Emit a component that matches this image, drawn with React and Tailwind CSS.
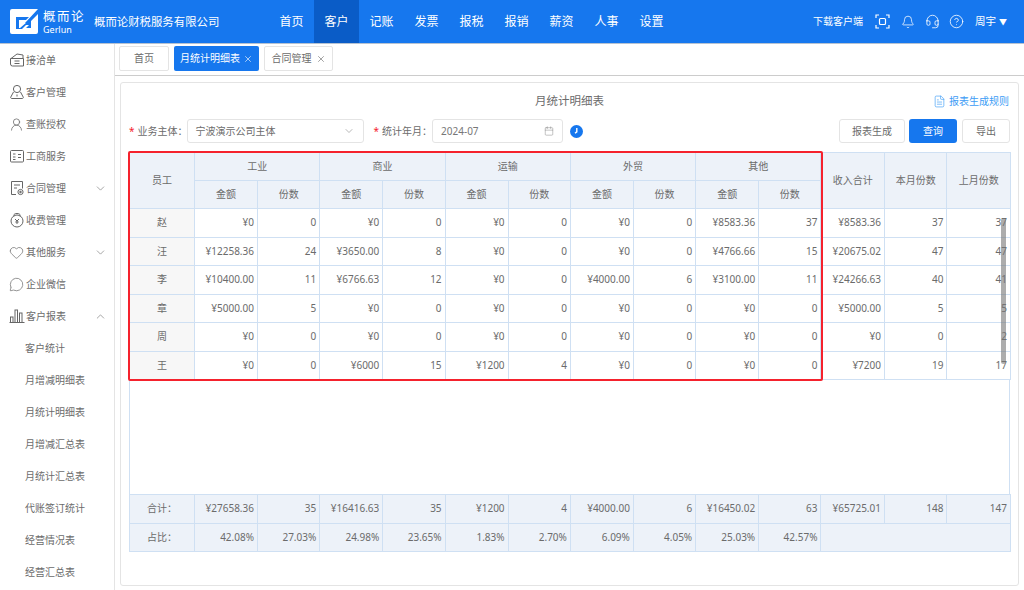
import {
  Bell,
  ChevronDown,
  ChevronUp,
  CircleHelp,
  Headset,
  Heart,
  MessageCircle,
  UserRound,
  X,
  FileText,
  Calendar,
} from "lucide-react";

const FONT = { fontFamily: '"Noto Sans", "Noto Sans CJK SC", sans-serif' };

const navItems = ["首页", "客户", "记账", "发票", "报税", "报销", "薪资", "人事", "设置"];

function TrayIcon() {
  return (
    <svg width="16" height="16" viewBox="0 0 16 16" fill="none" stroke="#666" strokeWidth="1">
      <path d="M2 6.5 8 2l6 1v3.5M1.5 6.5h13v7.5h-11a2 2 0 0 1-2-2z" />
      <path d="M5.5 9h5M5.5 11.5h5" />
    </svg>
  );
}

function UserTriIcon() {
  return (
    <svg width="16" height="16" viewBox="0 0 16 16" fill="none" stroke="#666" strokeWidth="1">
      <circle cx="8" cy="5" r="3.6" />
      <path d="M4.5 8 1.8 13a1 1 0 0 0 .9 1.5h10.6a1 1 0 0 0 .9-1.5L11.5 8" />
      <path d="M8 10.5v2" />
    </svg>
  );
}

function CardIcon() {
  return (
    <svg width="16" height="16" viewBox="0 0 16 16" fill="none" stroke="#666" strokeWidth="1">
      <rect x="1.5" y="2.5" width="13" height="11.5" rx="1" />
      <path d="M4 6h2.5M4 9h2.5M4 11.5h2.5M9 6.5h3M9 9.5h3" />
    </svg>
  );
}

function ContractIcon() {
  return (
    <svg width="16" height="16" viewBox="0 0 16 16" fill="none" stroke="#666" strokeWidth="1">
      <path d="M7 14.5H2.5v-13h11v7" />
      <path d="M5 5h6M5 8h3" />
      <circle cx="11.5" cy="12" r="2.6" />
      <circle cx="11.5" cy="12" r="0.8" fill="#666" />
    </svg>
  );
}

function FeeIcon() {
  return (
    <svg width="16" height="16" viewBox="0 0 16 16" fill="none" stroke="#666" strokeWidth="1">
      <circle cx="8" cy="9" r="6" />
      <path d="M5 4.5V3.2C5 2 6 1.5 8 1.5s3 .5 3 1.7v1.3" />
      <path d="m6 7 2 2 2-2M8 9v3M6.3 10h3.4" />
    </svg>
  );
}

function BarsIcon() {
  return (
    <svg width="16" height="16" viewBox="0 0 16 16" fill="none" stroke="#666" strokeWidth="1">
      <path d="M.5 14.5h15" />
      <rect x="1.5" y="9" width="2.5" height="5.5" />
      <rect x="6" y="2" width="2.5" height="12.5" />
      <rect x="10.5" y="5" width="2.5" height="9.5" />
    </svg>
  );
}

function ScanIcon() {
  return (
    <svg width="15" height="15" viewBox="0 0 15 15" fill="none" stroke="#fff" strokeWidth="1.2" className="ml-[12px]">
      <path d="M1 4V1h3M11 1h3v3M14 11v3h-3M4 14H1v-3" />
      <rect x="4.5" y="4.5" width="6" height="6" rx="1" />
    </svg>
  );
}

const sideItems = [
  { label: "接洽单", icon: <TrayIcon /> },
  { label: "客户管理", icon: <UserTriIcon /> },
  { label: "查账授权", icon: <UserRound size={15} strokeWidth={1.2} color="#666" /> },
  { label: "工商服务", icon: <CardIcon /> },
  { label: "合同管理", icon: <ContractIcon />, arrow: "down" },
  { label: "收费管理", icon: <FeeIcon /> },
  { label: "其他服务", icon: <Heart size={15} strokeWidth={1.1} color="#666" />, arrow: "down" },
  { label: "企业微信", icon: <MessageCircle size={15} strokeWidth={1.1} color="#666" /> },
  { label: "客户报表", icon: <BarsIcon />, arrow: "up" },
];

const subItems = ["客户统计", "月增减明细表", "月统计明细表", "月增减汇总表", "月统计汇总表", "代账签订统计", "经营情况表", "经营汇总表"];

const groups = ["工业", "商业", "运输", "外贸", "其他"];

const rows = [
  ["赵", "¥0", 0, "¥0", 0, "¥0", 0, "¥0", 0, "¥8583.36", 37, "¥8583.36", 37, 37],
  ["汪", "¥12258.36", 24, "¥3650.00", 8, "¥0", 0, "¥0", 0, "¥4766.66", 15, "¥20675.02", 47, 47],
  ["李", "¥10400.00", 11, "¥6766.63", 12, "¥0", 0, "¥4000.00", 6, "¥3100.00", 11, "¥24266.63", 40, 41],
  ["章", "¥5000.00", 5, "¥0", 0, "¥0", 0, "¥0", 0, "¥0", 0, "¥5000.00", 5, 5],
  ["周", "¥0", 0, "¥0", 0, "¥0", 0, "¥0", 0, "¥0", 0, "¥0", 0, 2],
  ["王", "¥0", 0, "¥6000", 15, "¥1200", 4, "¥0", 0, "¥0", 0, "¥7200", 19, 17],
];

const totals = ["¥27658.36", 35, "¥16416.63", 35, "¥1200", 4, "¥4000.00", 6, "¥16450.02", 63, "¥65725.01", 148, 147];
const ratios = ["42.08%", "27.03%", "24.98%", "23.65%", "1.83%", "2.70%", "6.09%", "4.05%", "25.03%", "42.57%"];

function Cols() {
  return (
    <colgroup>
      <col className="w-[65px]" />
      {groups.map((g) => [<col key={g + "a"} className="w-[63px]" />, <col key={g + "b"} className="w-[62.3px]" />])}
      <col className="w-[63.5px]" />
      <col className="w-[62.5px]" />
      <col className="w-[63.5px]" />
    </colgroup>
  );
}

const th = "border border-[#cfe0f3] bg-[#edf2f9] font-normal text-[10px] text-[#6b6b6b]";
const td = "border border-[#cfe0f3] text-right pr-[3px] text-[10px] text-[#6b6b6b]";

function MonthlyTable() {
  return (
    <div className="relative mt-[9px] flex h-[400px] w-[881px] flex-col">
      <table className="w-full table-fixed border-collapse">
        <Cols />
        <thead>
          <tr className="h-[28px]">
            <th rowSpan={2} className={th}>员工</th>
            {groups.map((g) => (
              <th key={g} colSpan={2} className={th}>{g}</th>
            ))}
            <th rowSpan={2} className={th}>收入合计</th>
            <th rowSpan={2} className={th}>本月份数</th>
            <th rowSpan={2} className={th}>上月份数</th>
          </tr>
          <tr className="h-[28px]">
            {groups.map((g) => [
              <th key={g + "a"} className={th}>金额</th>,
              <th key={g + "b"} className={th}>份数</th>,
            ])}
          </tr>
        </thead>
        <tbody>
          {rows.map((row) => (
            <tr key={row[0]} className="h-[28.5px]">
              {row.map((v, i) =>
                i === 0 ? (
                  <td key={i} className="border border-[#cfe0f3] bg-[#f7f7f7] text-center text-[10px] text-[#6b6b6b]">{v}</td>
                ) : (
                  <td key={i} className={td}>{v}</td>
                )
              )}
            </tr>
          ))}
        </tbody>
      </table>
      <div className="flex-1 border-x border-[#cfe0f3]" />
      <table className="w-full table-fixed border-collapse">
        <Cols />
        <tbody className="bg-[#edf2f9]">
          <tr className="h-[28.5px]">
            <td className="border border-[#cfe0f3] text-center text-[10px] text-[#6b6b6b]">合计：</td>
            {totals.map((v, i) => (
              <td key={i} className={td}>{v}</td>
            ))}
          </tr>
          <tr className="h-[28.5px]">
            <td className="border border-[#cfe0f3] text-center text-[10px] text-[#6b6b6b]">占比：</td>
            {ratios.map((v, i) => (
              <td key={i} className={td}>{v}</td>
            ))}
            <td colSpan={3} className="border border-[#cfe0f3]" />
          </tr>
        </tbody>
      </table>
      {/* red highlight over the table */}
      <div className="pointer-events-none absolute -left-[1px] -top-[1px] h-[230px] w-[695px] rounded-[2px] border-2 border-[#f5222d]" />
      {/* scrollbar */}
      <div className="absolute left-[872px] top-[66px] h-[146px] w-[5px] rounded-full bg-[#777]/60" />
    </div>
  );
}

export default function App() {
  return (
    <div className="flex h-[590px] w-[1024px] flex-col overflow-hidden bg-white" style={FONT}>
      {/* Header */}
      <header className="flex h-[44px] shrink-0 items-center border-b border-[#b5c2d2] bg-[#1677ee] text-white">
        <div className="flex w-[269px] shrink-0 items-center pl-[10px]">
          <svg width="28" height="25" viewBox="0 0 28 25">
            <path d="M2 0h26L15 14h4l9-9v18a2 2 0 0 1-2 2H2a2 2 0 0 1-2-2V2a2 2 0 0 1 2-2z" fill="#fff" />
            <path d="M6 8h13l-3 3H9v8h1l10-8.5h1V19l-5 0 3-3h-3l-4 4H6z" fill="#1677ee" />
          </svg>
          <div className="ml-[5px] flex w-[41px] flex-col leading-none">
            <span className="whitespace-nowrap text-[12.5px] leading-[15px] tracking-[1.5px]">概而论</span>
            <span className="text-[9px] leading-[11px]">Gerlun</span>
          </div>
          <span className="ml-[10px] text-[11.4px]">概而论财税服务有限公司</span>
        </div>
        <nav className="flex h-full">
          {navItems.map((n) => (
            <div
              key={n}
              className={`flex h-full w-[45px] items-center justify-center text-[12px] ${n === "客户" ? "bg-[#0a5cc7]" : ""}`}
            >
              {n}
            </div>
          ))}
        </nav>
        <div className="ml-auto flex items-center pr-[17px]">
          <span className="text-[10px]">下载客户端</span>
          <ScanIcon />
          <Bell size={14} strokeWidth={1.3} className="ml-[11px]" />
          <Headset size={15} strokeWidth={1.3} className="ml-[10px]" />
          <CircleHelp size={15} strokeWidth={1.3} className="ml-[9px]" />
          <span className="ml-[11px] text-[10.5px]">周宇</span>
          <span className="ml-[3px] text-[8px]">▼</span>
        </div>
      </header>

      <div className="flex min-h-0 flex-1">
        {/* Sidebar */}
        <aside className="w-[115px] shrink-0 overflow-hidden border-r border-[#e4e4e4]">
          {sideItems.map((s) => (
            <div key={s.label} className="flex h-[32.06px] items-center pl-[9px] pr-[7px] text-[10px] text-[#6b6b6b]">
              <span className="flex w-[17px] shrink-0 items-center">{s.icon}</span>
              <span>{s.label}</span>
              {s.arrow === "down" && <ChevronDown size={13} strokeWidth={1.2} className="ml-auto" color="#777" />}
              {s.arrow === "up" && <ChevronUp size={13} strokeWidth={1.2} className="ml-auto" color="#777" />}
            </div>
          ))}
          {subItems.map((s) => (
            <div key={s} className="flex h-[32.06px] items-center pl-[25px] text-[10px] text-[#6b6b6b]">{s}</div>
          ))}
        </aside>

        <main className="flex min-w-0 flex-1 flex-col">
          {/* Tabs */}
          <div className="flex h-[32px] shrink-0 items-start gap-[5px] border-b border-[#ccc] pl-[4px] pt-[2px]">
            <div className="flex h-[25px] w-[50px] items-center justify-center rounded-[2px] border border-[#e4e4e4] text-[10px] text-[#6b6b6b]">首页</div>
            <div className="flex h-[25px] w-[85px] items-center justify-center gap-[3px] rounded-[2px] bg-[#1677ee] text-[10px] text-white">
              月统计明细表
              <X size={10} strokeWidth={1.5} />
            </div>
            <div className="flex h-[25px] w-[69px] items-center justify-center gap-[4px] rounded-[2px] border border-[#e4e4e4] text-[10px] text-[#6b6b6b]">
              合同管理
              <X size={10} strokeWidth={1.5} />
            </div>
          </div>

          {/* Card */}
          <section className="ml-[5px] mt-[6px] h-[504px] w-[899px] rounded-[3px] border border-[#e4e4e4] px-[8px]">
            <div className="flex h-[36px] items-center">
              <div className="w-[77px]" />
              <h1 className="flex-1 text-center text-[11.5px] font-normal text-[#6b6b6b]">月统计明细表</h1>
              <div className="flex w-[77px] items-center gap-[3px] text-[10px] text-[#3c9cf5]">
                <FileText size={13} strokeWidth={1.2} className="shrink-0" />
                <span className="whitespace-nowrap">报表生成规则</span>
              </div>
            </div>
            <div className="flex h-[24px] items-center text-[10px] text-[#6b6b6b]">
              <span className="text-[#f5222d]">*</span>
              <span className="ml-[3px] w-[49px] whitespace-nowrap">业务主体：</span>
              <div className="flex h-[24px] w-[177px] items-center justify-between rounded-[3px] border border-[#e4e4e4] px-[8px]">
                <span>宁波演示公司主体</span>
                <ChevronDown size={12} strokeWidth={1.2} color="#888" />
              </div>
              <span className="ml-[10px] text-[#f5222d]">*</span>
              <span className="ml-[3px] w-[50px] whitespace-nowrap">统计年月：</span>
              <div className="flex h-[24px] w-[131px] items-center justify-between rounded-[3px] border border-[#e4e4e4] px-[8px] text-[#777]">
                <span>2024-07</span>
                <Calendar size={10} strokeWidth={1.2} color="#888" />
              </div>
              <svg className="ml-[7px]" width="13" height="13" viewBox="0 0 13 13">
                <circle cx="6.5" cy="6.5" r="6.5" fill="#1677ee" />
                <path d="M6.8 3v3.8L5 8.3" fill="none" stroke="#fff" strokeWidth="1.4" />
              </svg>
              <div className="ml-auto flex">
                <div className="flex h-[24px] w-[66px] items-center justify-center rounded-[3px] border border-[#e4e4e4]">报表生成</div>
                <div className="ml-[4px] flex h-[24px] w-[48px] items-center justify-center rounded-[3px] bg-[#1677ee] text-white">查询</div>
                <div className="ml-[5px] flex h-[24px] w-[48px] items-center justify-center rounded-[3px] border border-[#e4e4e4]">导出</div>
              </div>
            </div>
            <MonthlyTable />
          </section>
        </main>
      </div>
    </div>
  );
}
